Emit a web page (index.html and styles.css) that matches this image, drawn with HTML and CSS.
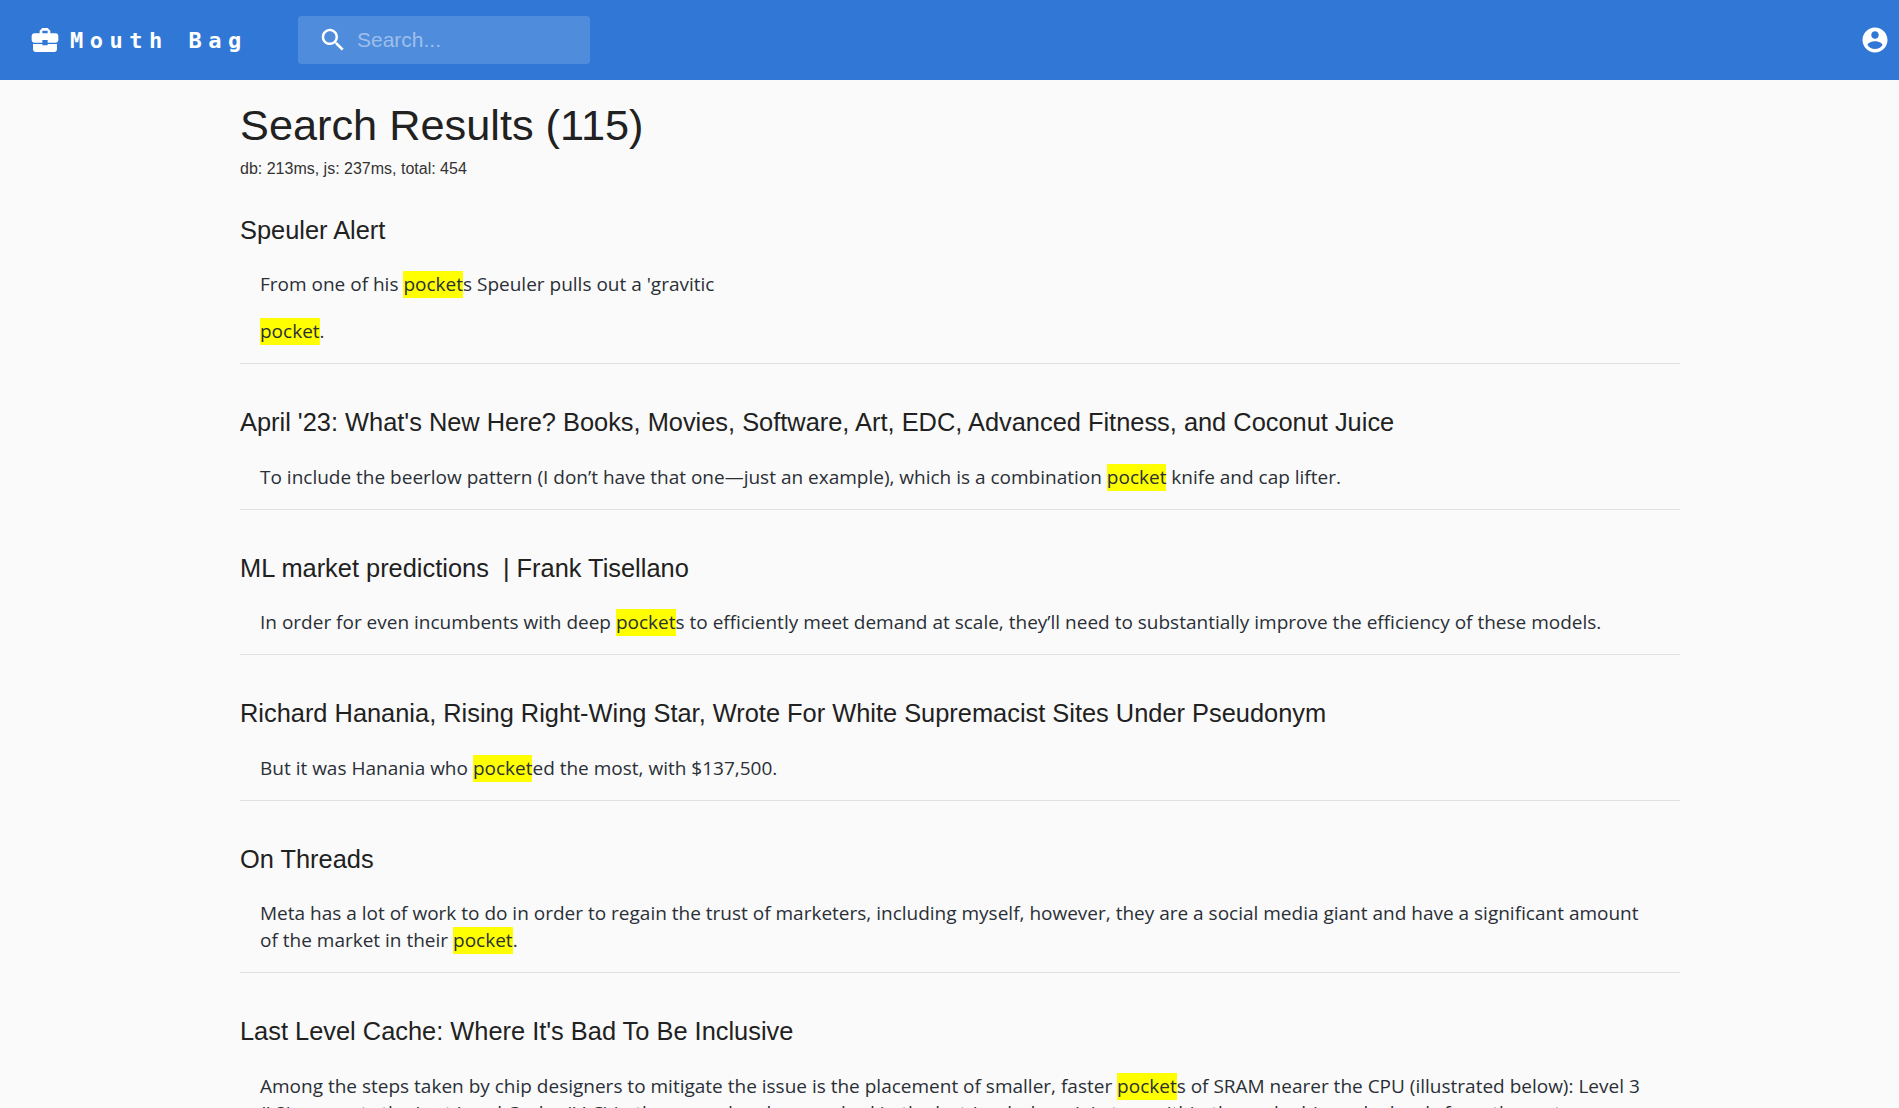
FILE: index.html
```html
<!DOCTYPE html>
<html lang="en">
<head>
<meta charset="utf-8">
<title>Mouth Bag</title>
<link rel="stylesheet" href="styles.css">
</head>
<body>
<header class="appbar">
  <div class="brand">
    <svg class="brand-icon" viewBox="0 0 24 24"><path d="M10 16v-1H3.01L3 19c0 1.11.89 2 2 2h14c1.11 0 2-.89 2-2v-4h-7v1h-4zm10-9h-4.01V5l-2-2h-4l-2 2v2H4c-1.1 0-2 .9-2 2v3c0 1.11.89 2 2 2h6v-2h4v2h6c1.1 0 2-.9 2-2V9c0-1.1-.9-2-2-2zm-6 0h-4V5h4v2z"/></svg>
    <span class="brand-name">Mouth Bag</span>
  </div>
  <div class="search">
    <svg class="search-icon" viewBox="0 0 24 24"><path d="M15.5 14h-.79l-.28-.27C15.41 12.59 16 11.11 16 9.5 16 5.91 13.09 3 9.5 3S3 5.91 3 9.5 5.91 16 9.5 16c1.61 0 3.09-.59 4.23-1.57l.27.28v.79l5 4.99L20.49 19l-4.99-5zm-6 0C7.01 14 5 11.99 5 9.5S7.01 5 9.5 5 14 7.01 14 9.5 11.99 14 9.5 14z"/></svg>
    <span class="search-placeholder">Search...</span>
  </div>
  <svg class="user-icon" viewBox="0 0 24 24"><path d="M12 2C6.48 2 2 6.48 2 12s4.48 10 10 10 10-4.48 10-10S17.52 2 12 2zm0 3c1.66 0 3 1.34 3 3s-1.34 3-3 3-3-1.34-3-3 1.34-3 3-3zm0 14.2c-2.5 0-4.71-1.28-6-3.22.03-1.99 4-3.08 6-3.08 1.99 0 5.97 1.09 6 3.08-1.29 1.94-3.5 3.22-6 3.22z"/></svg>
</header>
<main class="results">
  <h1 class="results-title">Search Results (115)</h1>
  <p class="timing">db: 213ms, js: 237ms, total: 454</p>

  <article class="result">
    <h2 class="result-title">Speuler Alert</h2>
    <p class="snippet">From one of his <mark>pocket</mark>s Speuler pulls out a 'gravitic</p>
    <p class="snippet"><mark>pocket</mark>.</p>
  </article>

  <article class="result">
    <h2 class="result-title">April '23: What's New Here? Books, Movies, Software, Art, EDC, Advanced Fitness, and Coconut Juice</h2>
    <p class="snippet">To include the beerlow pattern (I don’t have that one—just an example), which is a combination <mark>pocket</mark> knife and cap lifter.</p>
  </article>

  <article class="result">
    <h2 class="result-title">ML market predictions &nbsp;| Frank Tisellano</h2>
    <p class="snippet">In order for even incumbents with deep <mark>pocket</mark>s to efficiently meet demand at scale, they’ll need to substantially improve the efficiency of these models.</p>
  </article>

  <article class="result">
    <h2 class="result-title">Richard Hanania, Rising Right-Wing Star, Wrote For White Supremacist Sites Under Pseudonym</h2>
    <p class="snippet">But it was Hanania who <mark>pocket</mark>ed the most, with $137,500.</p>
  </article>

  <article class="result">
    <h2 class="result-title">On Threads</h2>
    <p class="snippet">Meta has a lot of work to do in order to regain the trust of marketers, including myself, however, they are a social media giant and have a significant amount of the market in their <mark>pocket</mark>.</p>
  </article>

  <article class="result">
    <h2 class="result-title">Last Level Cache: Where It's Bad To Be Inclusive</h2>
    <p class="snippet">Among the steps taken by chip designers to mitigate the issue is the placement of smaller, faster <mark>pocket</mark>s of SRAM nearer the CPU (illustrated below): Level 3 (L3) connects the Last Level Cache (LLC) in the second cache searched in the last (each domain) stays within the cache hierarchy levels from the system core and</p>
  </article>
</main>
</body>
</html>
```
FILE: styles.css
```css
html, body {
  margin: 0;
  height: 1108px;
  overflow: hidden;
}
body {
  background: #fafafa;
  color: #212121;
  font-family: "Liberation Sans", Arial, sans-serif;
}
.appbar {
  display: flex;
  align-items: center;
  height: 80px;
  padding: 0 9px 0 29px;
  background: #3178d6;
  color: #fff;
  box-sizing: border-box;
}
.brand {
  display: flex;
  align-items: center;
  gap: 9px;
  width: 269px;
}
.brand-icon {
  width: 32px;
  height: 32px;
  fill: #fff;
  flex: none;
}
.brand-name {
  padding-top: 1px;
  font-family: "DejaVu Sans Mono", monospace;
  font-weight: 700;
  font-size: 22px;
  letter-spacing: 6.5px;
  white-space: pre;
}
.search {
  display: flex;
  align-items: center;
  width: 292px;
  height: 48px;
  padding-left: 20px;
  gap: 9px;
  box-sizing: border-box;
  border-radius: 4px;
  background: rgba(255, 255, 255, 0.15);
}
.search-icon {
  width: 30px;
  height: 30px;
  fill: #fff;
  flex: none;
}
.search-placeholder {
  font-size: 21px;
  color: rgba(255, 255, 255, 0.45);
}
.user-icon {
  width: 30px;
  height: 30px;
  fill: #fff;
  margin-left: auto;
}
.results {
  width: 1440px;
  margin-left: 240px;
}
.results-title {
  margin: 0;
  padding-top: 21px;
  font-size: 43.3px;
  font-weight: 400;
  line-height: 48px;
}
.timing {
  margin: 11px 0 0;
  font-size: 16px;
  line-height: 18px;
  color: #333;
}
.result {
  padding-bottom: 18px;
  border-bottom: 1px solid #e0e0e0;
  margin-top: 44px;
}
.timing + .result {
  margin-top: 37.7px;
}
.result-title {
  margin: 0 0 27.5px;
  font-size: 25.4px;
  font-weight: 400;
  line-height: 28px;
}
.snippet {
  margin: 0 0 0 20px;
  max-width: 1380px;
  font-family: "Open Sans", sans-serif;
  font-size: 19px;
  line-height: 27px;
  color: #2a2f36;
}
.snippet + .snippet {
  margin-top: 20px;
}
mark {
  display: inline-block;
  background: #ff0;
  color: inherit;
}
```
